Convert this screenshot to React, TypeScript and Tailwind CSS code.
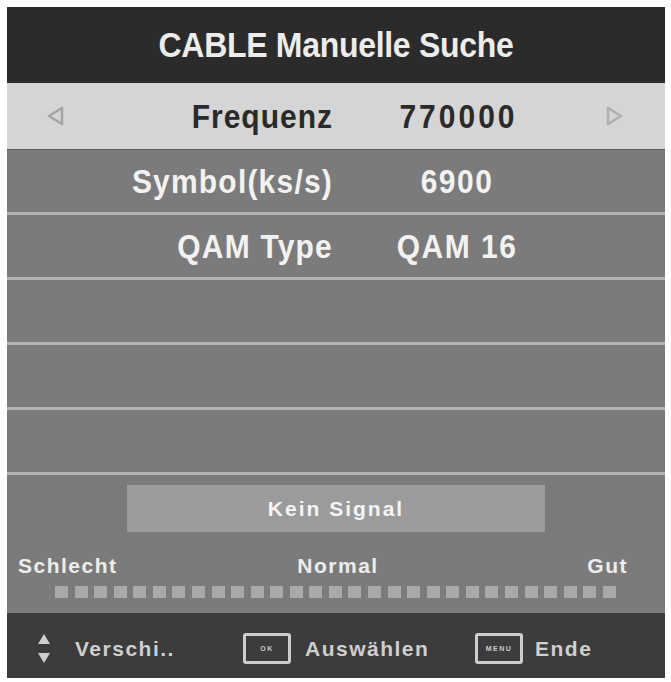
import React from 'react';

const font = { fontFamily: '"Liberation Sans", Arial, sans-serif' };

const rows = [
  { label: 'Symbol(ks/s)', value: '6900' },
  { label: 'QAM Type', value: 'QAM 16' },
  { label: '', value: '' },
  { label: '', value: '' },
  { label: '', value: '' },
];

const dots = Array.from({ length: 29 }, (_, i) => i);

const ArrowLeft = () => (
  <svg width="20" height="22" viewBox="0 0 20 22">
    <path d="M17 3 L4 11 L17 19 Z" fill="none" stroke="#a4a4a4" strokeWidth="2.5" strokeLinejoin="round" />
  </svg>
);

const ArrowRight = () => (
  <svg width="20" height="22" viewBox="0 0 20 22">
    <path d="M3 3 L16 11 L3 19 Z" fill="none" stroke="#b0b0b0" strokeWidth="2.5" strokeLinejoin="round" />
  </svg>
);

const UpDown = () => (
  <svg width="14" height="32" viewBox="0 0 14 32">
    <path d="M7 1 L13 11 L1 11 Z" fill="#cfcfcf" />
    <path d="M1 20 L13 20 L7 30 Z" fill="#cfcfcf" />
  </svg>
);

const KeyBox: React.FC<{ label: string }> = ({ label }) => (
  <div className="w-[48px] h-[31px] border-[3px] border-[#cdcdcd] rounded-[3px] flex items-center justify-center">
    <span className="text-[7px] font-bold text-[#cdcdcd] leading-none">{label}</span>
  </div>
);

export default function App() {
  return (
    <div className="w-[671px] h-[682px] bg-white pt-[7px] pl-[7px]" style={font}>
      <div className="w-[658px] h-[671px] flex flex-col">
        {/* title */}
        <div className="h-[76px] bg-[#2b2b2b] flex items-center justify-center">
          <span className="text-[32px] font-bold text-[#ececec] tracking-[-0.3px] scale-y-110">CABLE Manuelle Suche</span>
        </div>

        {/* selected row */}
        <div className="h-[67px] bg-[#d5d5d5] flex items-center pl-[38px] border-b border-[#5a5a5a]">
          <ArrowLeft />
          <div className="w-[268px] text-right text-[30px] font-bold tracking-[1px] text-[#2a2a2a] scale-y-110">Frequenz</div>
          <div className="w-[248px] text-center text-[30px] font-bold tracking-[3px] text-[#2a2a2a] pl-[3px] scale-y-110">770000</div>
          <div className="w-[24px]" />
          <ArrowRight />
        </div>

        {/* other rows */}
        {rows.map((r, i) => (
          <div
            key={i}
            className="h-[65px] bg-[#7b7b7b] border-b-[3px] border-[#b3b3b3] flex items-center"
          >
            <div className="w-[326px] text-right text-[30px] font-bold tracking-[1.2px] text-[#f2f2f2] scale-y-110">{r.label}</div>
            <div className="w-[248px] text-center text-[30px] font-bold tracking-[1.5px] text-[#f2f2f2] scale-y-110">{r.value}</div>
          </div>
        ))}

        {/* signal */}
        <div className="h-[138px] bg-[#7b7b7b] pt-[10px] flex flex-col">
          <div className="mx-auto w-[418px] h-[47px] bg-[#9b9b9b] flex items-center justify-center">
            <span className="text-[21px] font-bold tracking-[2px] text-[#f4f4f4]">Kein Signal</span>
          </div>
          <div className="mt-[18px] h-[26px] grid grid-cols-[1fr_auto_1fr] items-center pl-[11px] pr-[37px] text-[21px] font-bold tracking-[1.5px] text-[#ededed]">
            <span className="text-left">Schlecht</span>
            <span className="pl-[30px]">Normal</span>
            <span className="text-right">Gut</span>
          </div>
          <div className="mt-[10px] ml-[48px] w-[561px] flex justify-between">
            {dots.map((d) => (
              <div key={d} className="w-[13px] h-[12px] bg-[#a9a9a9]" />
            ))}
          </div>
        </div>

        {/* footer */}
        <div className="h-[65px] bg-[#3c3c3c] flex items-center pt-[6px] pl-[30px] text-[21px] font-bold tracking-[1.5px] text-[#cfcfcf]">
          <div className="w-[206px] flex items-center">
            <UpDown />
            <span className="ml-[24px]">Verschi..</span>
          </div>
          <div className="w-[232px] flex items-center">
            <KeyBox label="OK" />
            <span className="ml-[14px]">Auswählen</span>
          </div>
          <div className="flex items-center">
            <KeyBox label="MENU" />
            <span className="ml-[12px]">Ende</span>
          </div>
        </div>
      </div>
    </div>
  );
}
